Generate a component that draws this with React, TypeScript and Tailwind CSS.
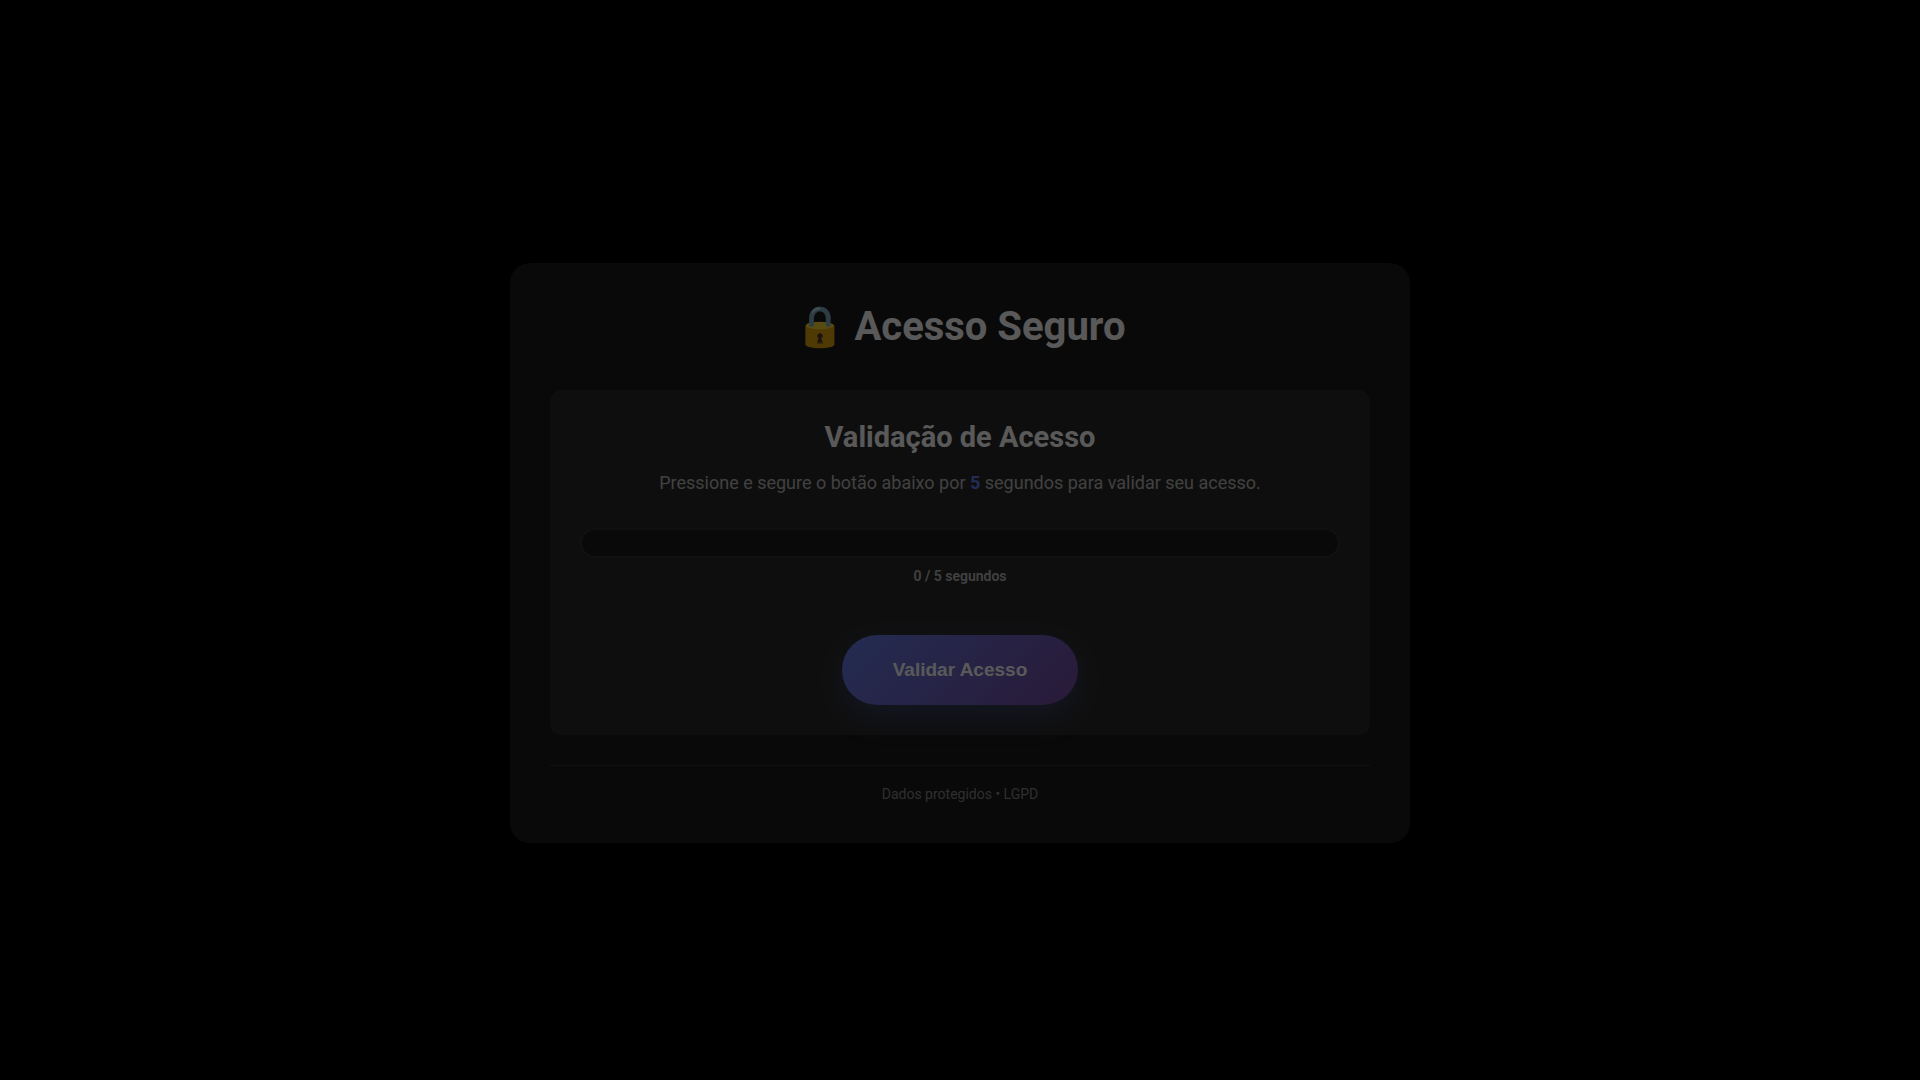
import { useEffect, useRef, useState } from "react";

const TOTAL_SECONDS = 5;

export default function App() {
  const [elapsed, setElapsed] = useState(0);
  const timer = useRef<any>(null);

  const stopHold = () => {
    clearInterval(timer.current);
    setElapsed((prev) => (prev >= TOTAL_SECONDS ? prev : 0));
  };

  const startHold = () => {
    clearInterval(timer.current);
    timer.current = setInterval(() => {
      setElapsed((prev) => Math.min(prev + 1, TOTAL_SECONDS));
    }, 1000);
  };

  useEffect(() => {
    return () => clearInterval(timer.current);
  }, []);

  return (
    <div className="min-h-screen bg-black flex items-center justify-center p-5 pt-[46px] font-[Roboto,sans-serif] text-white">
      <main className="w-full max-w-[900px] rounded-[20px] bg-[#1a1a1a] p-10 text-center opacity-35">
        <h1 className="mb-10 text-[40px] leading-[47px] font-bold">🔒 Acesso Seguro</h1>

        <section className="rounded-xl bg-[#2a2a2a] p-[30px]">
          <h2 className="mb-[15px] text-[29px] leading-[35px] font-bold">Validação de Acesso</h2>
          <p className="mb-8 text-[18px] leading-[26px] text-[#bbbbbb]">
            Pressione e segure o botão abaixo por <strong className="font-bold text-[#667eea]">{TOTAL_SECONDS}</strong> segundos para validar seu acesso.
          </p>

          <div className="h-[30px] overflow-hidden rounded-[15px] border-2 border-[#333333] bg-[#1a1a1a]">
            {/* Progress fill */}
            <div
              className="h-full bg-linear-[135deg,#667eea,#764ba2]"
              style={{ width: `${(elapsed / TOTAL_SECONDS) * 100}%` }}
            />
          </div>
          <div className="mt-2.5 text-[14px] leading-[17px] font-semibold text-[#bbbbbb]">
            {elapsed} / {TOTAL_SECONDS} segundos
          </div>

          <button
            type="button"
            onPointerDown={startHold}
            onPointerUp={stopHold}
            onPointerLeave={stopHold}
            className="mt-[50px] h-[70px] rounded-full bg-linear-[135deg,#667eea,#764ba2] px-[51px] align-top font-['Liberation_Sans',sans-serif] text-[19px] font-bold shadow-[0_10px_30px_rgba(102,126,234,0.3)]"
          >
            Validar Acesso
          </button>
        </section>

        <footer className="mt-[30px] border-t border-[#333333] pt-5 text-[14px] leading-[17px] text-[#888888]">
          Dados protegidos • LGPD
        </footer>
      </main>
    </div>
  );
}
